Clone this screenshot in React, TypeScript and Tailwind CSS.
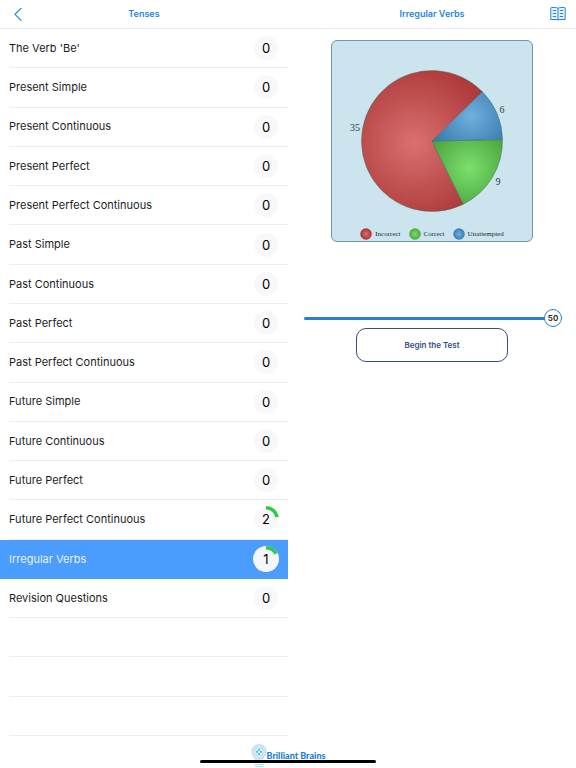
import { useState } from "react";

interface Topic {
  name: string;
  score: number;
  progress: number;
}

const TOPICS: Topic[] = [
  { name: "The Verb 'Be'", score: 0, progress: 0 },
  { name: "Present Simple", score: 0, progress: 0 },
  { name: "Present Continuous", score: 0, progress: 0 },
  { name: "Present Perfect", score: 0, progress: 0 },
  { name: "Present Perfect Continuous", score: 0, progress: 0 },
  { name: "Past Simple", score: 0, progress: 0 },
  { name: "Past Continuous", score: 0, progress: 0 },
  { name: "Past Perfect", score: 0, progress: 0 },
  { name: "Past Perfect Continuous", score: 0, progress: 0 },
  { name: "Future Simple", score: 0, progress: 0 },
  { name: "Future Continuous", score: 0, progress: 0 },
  { name: "Future Perfect", score: 0, progress: 0 },
  { name: "Future Perfect Continuous", score: 2, progress: 80 },
  { name: "Irregular Verbs", score: 1, progress: 62 },
  { name: "Revision Questions", score: 0, progress: 0 },
];

const EMPTY_ROWS = 3;

// angles are in degrees, clockwise from three o'clock
const SLICES = [
  { name: "Incorrect", value: 35, from: 63.6, to: 315.6, light: "#d97070", dark: "#a83232", gx: 83, gy: 103, gr: 92, lx: 24, ly: 91 },
  { name: "Correct", value: 9, from: -1.2, to: 63.6, light: "#7be06c", dark: "#4ca63f", gx: 138, gy: 128, gr: 42, lx: 167, ly: 145 },
  { name: "Unattempted", value: 6, from: -44.4, to: -1.2, light: "#6fb0df", dark: "#3c7db0", gx: 140, gy: 76, gr: 40, lx: 171, ly: 73 },
];

const point = (deg: number, r: number) => {
  const a = (deg * Math.PI) / 180;
  return `${(101 + r * Math.cos(a)).toFixed(2)} ${(101 + r * Math.sin(a)).toFixed(2)}`;
};

const ScoreBadge = ({ score, progress, active }: { score: number; progress: number; active: boolean }) => {
  const end = ((progress - 90) * Math.PI) / 180;
  return (
    <span className="relative flex size-[26px] items-center justify-center">
      <svg viewBox="0 0 26 26" className="absolute inset-0" aria-hidden="true">
        <circle cx="13" cy="13" r={active ? 13 : 12} fill={active ? "#f4f8fd" : "#f8f7fa"} />
        {progress > 0 && (
          <path
            d={`M13 1.75 A11.25 11.25 0 0 1 ${13 + 11.25 * Math.cos(end)} ${13 + 11.25 * Math.sin(end)}`}
            fill="none"
            stroke="#2bcb45"
            strokeWidth="3.5"
          />
        )}
      </svg>
      <span className="relative text-[13px] leading-4 text-black">{score}</span>
    </span>
  );
};

const ResultsChart = () => (
  <figure className="mx-auto mt-[11px] flex w-[202px] flex-col rounded-md border border-[#6f98b0] bg-[#cbe4ed] font-['Liberation_Serif',serif] text-[#23292d]">
    <svg viewBox="1 1 200 186" className="w-full" role="img" aria-label="Test results">
      <defs>
        {SLICES.map((s) => (
          <radialGradient key={s.name} id={s.name} gradientUnits="userSpaceOnUse" cx={s.gx} cy={s.gy} r={s.gr}>
            <stop offset="0" stopColor={s.light} />
            <stop offset="1" stopColor={s.dark} />
          </radialGradient>
        ))}
      </defs>
      {SLICES.map((s) => (
        <g key={s.name}>
          <path
            d={`M101 101 L${point(s.from, 70.5)} A70.5 70.5 0 ${s.to - s.from > 180 ? 1 : 0} 1 ${point(s.to, 70.5)} Z`}
            fill={`url(#${s.name})`}
            stroke="#4b6a5a"
            strokeWidth="0.5"
          />
          <text x={s.lx} y={s.ly} fontSize="10" textAnchor="middle" fill="#333c42">
            {s.value}
          </text>
        </g>
      ))}
    </svg>
    <figcaption className="flex justify-center gap-2 text-[7px] leading-[14px]">
      {SLICES.map((s) => (
        <span key={s.name} className="flex items-center gap-[3px]">
          <svg viewBox="0 0 12 12" className="size-3" aria-hidden="true">
            <radialGradient id={`${s.name}-key`}>
              <stop offset="0" stopColor={s.light} />
              <stop offset="1" stopColor={s.dark} />
            </radialGradient>
            <circle cx="6" cy="6" r="5.75" fill={`url(#${s.name}-key)`} />
          </svg>
          {s.name}
        </span>
      ))}
    </figcaption>
  </figure>
);

const BrandMark = () => (
  <svg viewBox="0 0 16 24" className="h-6 w-4" aria-hidden="true">
    <path
      d="M8 .7C3.8.7 1 3.6 1 7.4c0 2.8 1.1 4.2 2.2 5.3.6.6.8 1.4.8 2.3h8c0-.9.2-1.7.8-2.3C13.9 11.6 15 10.2 15 7.4 15 3.6 12.2.7 8 .7Z"
      fill="#d3e9f7"
      stroke="#a5cdec"
      strokeWidth=".8"
    />
    <path d="M3.5 6.5q0-3 3-3.7M12.5 6.5q0-3-3-3.7M3.5 9.5q1 2.5 3 2.7M12.5 9.5q-1 2.5-3 2.7" fill="none" stroke="#a9d2ef" strokeWidth=".7" />
    <path d="M8 4.8v2M8 8.9v2M5 7.9h2M9 7.9h2" stroke="#1fb79a" strokeWidth="1.3" />
    <path d="M3 20.5h10M4 22.5h8" stroke="#b9dcf5" strokeWidth="1.2" />
  </svg>
);

export default function App() {
  const [selected, setSelected] = useState("Irregular Verbs");
  const [count, setCount] = useState(50);

  return (
    <div className="flex min-h-screen flex-col bg-white font-['Inter',sans-serif] text-[#1c1c1e]">
      <header className="grid h-[29px] grid-cols-2 text-[9px] font-semibold text-[#2384e2]">
        <div className="grid grid-cols-[36px_1fr_36px] items-center border-b border-[#ececee]">
          <button type="button" aria-label="Back" className="flex justify-center">
            <svg viewBox="0 0 10 16" className="h-4 w-2.5" fill="none" stroke="currentColor" strokeWidth="1.2" strokeLinecap="round" aria-hidden="true">
              <path d="M8 2.3 2 8.3l6 6" />
            </svg>
          </button>
          <h1 className="text-center">Tenses</h1>
        </div>
        <div className="grid grid-cols-[36px_1fr_36px] items-center border-b border-[#ececee]">
          <h2 className="col-start-2 text-center">Irregular Verbs</h2>
          <button type="button" aria-label="Open the book" className="flex justify-center">
            <svg viewBox="0 0 16 14" className="h-3.5 w-4" fill="none" stroke="currentColor" strokeWidth="1" aria-hidden="true">
              <path d="M8 1.5Q7 .5 5.5.5H1.5Q.8.5.8 1.2V12.5h5.2q1.5 0 2 .8.5-.8 2-.8h5.2V1.2Q15.2.5 14.5.5h-4Q9 .5 8 1.5ZM8 1.5v11.5" fill="#e6f2fd" />
              <path d="M2.8 3.5h3.4M2.8 6.5h3.4M2.8 9.5h3.4M9.8 3.5h3.4M9.8 6.5h3.4M9.8 9.5h3.4" />
            </svg>
          </button>
        </div>
      </header>

      <div className="grid flex-1 grid-cols-2">
        <ul className="grid auto-rows-fr text-[11px]">
          {TOPICS.map((topic) => {
            const active = topic.name === selected;
            return (
              <li key={topic.name} className={active ? "flex bg-[#4a9dfd]" : "flex pl-[9px]"}>
                <button
                  type="button"
                  onClick={() => setSelected(topic.name)}
                  className={
                    active
                      ? "flex flex-1 items-center justify-between px-[9px] text-left text-[#e3f0ff]"
                      : "flex flex-1 items-center justify-between border-b border-[#ededef] pr-[9px] text-left"
                  }
                >
                  {topic.name}
                  <ScoreBadge score={topic.score} progress={topic.progress} active={active} />
                </button>
              </li>
            );
          })}
          {Array.from({ length: EMPTY_ROWS }, (_, i) => (
            <li key={i} aria-hidden="true" className="flex pl-[9px]">
              <span className="flex-1 border-b border-[#ededef]" />
            </li>
          ))}
        </ul>

        <main>
          <ResultsChart />
          <div className="relative mt-[67px] mr-[14px] ml-4 h-[18px]">
            <input
              type="range"
              min={1}
              max={50}
              value={count}
              onChange={(e) => setCount(Number(e.target.value))}
              aria-label="Number of questions"
              className="block h-[18px] w-full appearance-none bg-transparent [&::-webkit-slider-runnable-track]:h-[3px] [&::-webkit-slider-runnable-track]:rounded-full [&::-webkit-slider-runnable-track]:bg-[#2a7fd3] [&::-webkit-slider-thumb]:-mt-2 [&::-webkit-slider-thumb]:size-[18px] [&::-webkit-slider-thumb]:appearance-none [&::-webkit-slider-thumb]:rounded-full [&::-webkit-slider-thumb]:border [&::-webkit-slider-thumb]:border-[#2a7fd3] [&::-webkit-slider-thumb]:bg-white"
            />
            <output
              className="pointer-events-none absolute top-0 w-[18px] text-center text-[8px] leading-[18px] font-semibold"
              style={{ left: `calc((100% - 18px) * ${(count - 1) / 49})` }}
            >
              {count}
            </output>
          </div>
          <button
            type="button"
            className="mx-auto mt-px block h-[34px] w-[152px] rounded-[10px] border border-[#2f4f86] text-[8px] font-semibold text-[#2f4f86]"
          >
            Begin the Test
          </button>
        </main>
      </div>

      <footer className="relative flex h-8 items-end justify-center">
        <div className="flex items-start">
          <BrandMark />
          <span className="mt-1.5 font-['Lato',sans-serif] text-[9px] leading-3 font-black text-[#1b7fd6]">Brilliant Brains</span>
        </div>
        <span className="absolute bottom-[5px] left-1/2 h-[3px] w-44 -translate-x-1/2 rounded-full bg-black" />
      </footer>
    </div>
  );
}
